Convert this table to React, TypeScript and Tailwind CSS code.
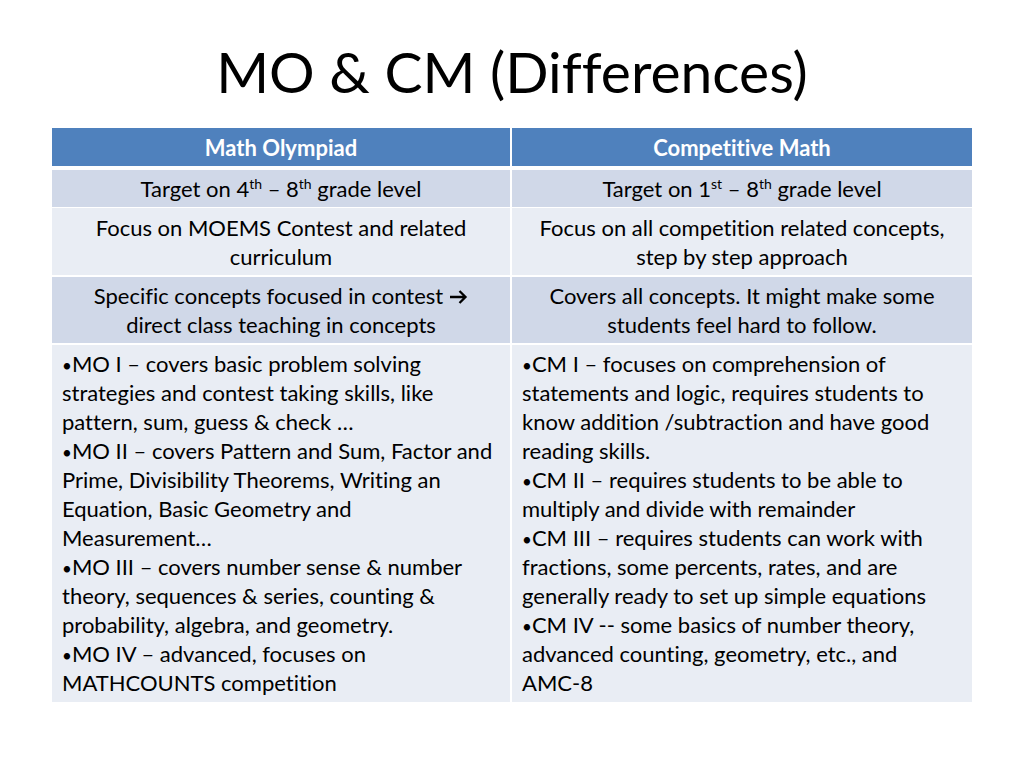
import React from "react";

const font = { fontFamily: '"Lato", "Open Sans", sans-serif' };

const moLines = [
  "MO I – covers basic problem solving",
  "strategies and contest taking skills, like",
  "pattern, sum, guess & check …",
  "MO II – covers Pattern and Sum, Factor and",
  "Prime, Divisibility Theorems, Writing an",
  "Equation, Basic Geometry and",
  "Measurement…",
  "MO III – covers number sense & number",
  "theory, sequences & series, counting &",
  "probability, algebra, and geometry.",
  "MO IV – advanced, focuses on",
  "MATHCOUNTS competition",
];

const cmLines = [
  "CM I – focuses on comprehension of",
  "statements and logic, requires students to",
  "know addition /subtraction and have good",
  "reading skills.",
  "CM II – requires students to be able to",
  "multiply and divide with remainder",
  "CM III – requires students can work with",
  "fractions, some percents, rates, and are",
  "generally ready to set up simple equations",
  "CM IV -- some basics of number theory,",
  "advanced counting, geometry, etc., and",
  "AMC-8",
];

// lines starting a new bullet
const moBullets = [0, 3, 7, 10];
const cmBullets = [0, 4, 6, 9];

function Cell({ lines, className }: { lines: React.ReactNode[]; className: string }) {
  return (
    <div className={"flex flex-col items-center justify-center text-[22px] leading-[29px] text-black " + className}>
      {lines.map((l, i) => (
        <div key={i} className="h-[29px] whitespace-nowrap">
          {l}
        </div>
      ))}
    </div>
  );
}

function List({ lines, bullets, className }: { lines: string[]; bullets: number[]; className: string }) {
  return (
    <div className={"flex flex-col pl-[10px] pt-[4px] text-[22px] leading-[29px] text-black " + className}>
      {lines.map((l, i) => (
        <div key={i} className="h-[29px] whitespace-nowrap">
          {bullets.includes(i) && <span className="text-[17px] leading-none">•</span>}
          {l}
        </div>
      ))}
    </div>
  );
}

function Sup({ children }: { children: React.ReactNode }) {
  return <span className="relative -top-[8px] text-[14px] leading-none">{children}</span>;
}

function Arrow() {
  return (
    <svg width="19" height="16" viewBox="0 0 19 16" className="ml-[6px] inline-block align-[-1px]">
      <path d="M1 8h15.5M10.5 2l6 6-6 6" fill="none" stroke="#000" strokeWidth="2.3" />
    </svg>
  );
}

export default function App() {
  return (
    <div className="h-[768px] w-[1024px] bg-white [font-variant-ligatures:none]" style={font}>
      <h1 className="pt-[32px] text-center text-[57px] leading-[78px] text-black">
        MO &amp; CM (Differences)
      </h1>

      <div className="ml-[52px] mt-[18px] w-[920px]">
        {/* header */}
        <div className="grid h-[38px] grid-cols-[458px_460px] gap-x-[2px]">
          <div className="flex items-center justify-center bg-[#4f81bd] text-[22px] font-bold text-white">
            Math Olympiad
          </div>
          <div className="flex items-center justify-center bg-[#4f81bd] text-[22px] font-bold text-white">
            Competitive Math
          </div>
        </div>

        <div className="mt-[4px] grid h-[37px] grid-cols-[458px_460px] gap-x-[2px]">
          <Cell
            className="bg-[#d0d8e8]"
            lines={[
              <>
                Target on 4<Sup>th</Sup> – 8<Sup>th</Sup> grade level
              </>,
            ]}
          />
          <Cell
            className="bg-[#d0d8e8]"
            lines={[
              <>
                Target on 1<Sup>st</Sup> – 8<Sup>th</Sup> grade level
              </>,
            ]}
          />
        </div>

        <div className="mt-[1px] grid h-[67px] grid-cols-[458px_460px] gap-x-[2px]">
          <Cell className="bg-[#e9edf4]" lines={["Focus on MOEMS Contest and related", "curriculum"]} />
          <Cell className="bg-[#e9edf4]" lines={["Focus on all competition related concepts,", "step by step approach"]} />
        </div>

        <div className="mt-[2px] grid h-[66px] grid-cols-[458px_460px] gap-x-[2px]">
          <Cell
            className="bg-[#d0d8e8]"
            lines={[
              <>
                Specific concepts focused in contest
                <Arrow />
              </>,
              "direct class teaching in concepts",
            ]}
          />
          <Cell
            className="bg-[#d0d8e8]"
            lines={["Covers all concepts. It might make some", "students feel hard to follow."]}
          />
        </div>

        <div className="mt-[2px] grid h-[357px] grid-cols-[458px_460px] gap-x-[2px]">
          <List className="bg-[#e9edf4]" lines={moLines} bullets={moBullets} />
          <List className="bg-[#e9edf4]" lines={cmLines} bullets={cmBullets} />
        </div>
      </div>
    </div>
  );
}
